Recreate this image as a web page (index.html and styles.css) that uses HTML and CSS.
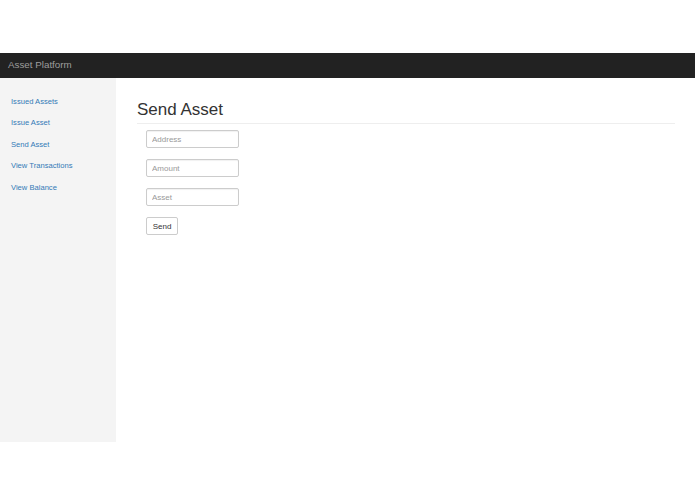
FILE: index.html
```html
<!DOCTYPE html>
<html>
<head>
<meta charset="utf-8">
<title>Asset Platform</title>
<link rel="stylesheet" href="styles.css">
</head>
<body>
<div class="page">
  <div class="top-space"></div>
  <nav class="navbar"><span class="brand">Asset Platform</span></nav>
  <div class="layout">
    <aside class="sidebar">
      <a class="side-link" href="#">Issued Assets</a>
      <a class="side-link" href="#">Issue Asset</a>
      <a class="side-link" href="#">Send Asset</a>
      <a class="side-link" href="#">View Transactions</a>
      <a class="side-link" href="#">View Balance</a>
    </aside>
    <main class="main">
      <h2 class="page-title">Send Asset</h2>
      <form class="send-form">
        <input class="field" type="text" placeholder="Address">
        <input class="field" type="text" placeholder="Amount">
        <input class="field" type="text" placeholder="Asset">
        <button class="btn" type="button">Send</button>
      </form>
    </main>
  </div>
</div>
</body>
</html>
```
FILE: styles.css
```css
html, body {
  margin: 0;
  padding: 0;
  background: #fff;
  font-family: "Liberation Sans", Arial, Helvetica, sans-serif;
  color: #333;
}
.page {
  display: flex;
  flex-direction: column;
  width: 695px;
  height: 494px;
}
.top-space {
  height: 53px;
}
.navbar {
  height: 25px;
  background: #222;
  display: flex;
  align-items: center;
  padding: 0 0 2px 8px;
  box-sizing: border-box;
}
.brand {
  color: #9d9d9d;
  font-size: 9.8px;
  line-height: 12px;
}
.layout {
  display: flex;
  height: 364px;
}
.sidebar {
  width: 116px;
  background: #f4f4f4;
  padding: 12.5px 0 0 11px;
  box-sizing: border-box;
  display: flex;
  flex-direction: column;
}
.side-link {
  display: block;
  color: #337ab7;
  text-decoration: none;
  font-size: 7.6px;
  line-height: 21.6px;
}
.main {
  flex: 1;
  padding: 0 20px 0 21px;
}
.page-title {
  margin: 22px 0 0;
  padding: 0 0 4px;
  font-size: 17px;
  font-weight: 500;
  line-height: 19px;
  color: #333;
  border-bottom: 1px solid #eee;
}
.send-form {
  display: flex;
  flex-direction: column;
  align-items: flex-start;
  gap: 11px;
  margin: 6px 0 0 9px;
}
.field {
  width: 93px;
  height: 18px;
  box-sizing: border-box;
  border: 1px solid #ccc;
  border-radius: 2px;
  padding: 0 5px;
  margin: 0;
  font-family: "Liberation Sans", Arial, sans-serif;
  font-size: 8px;
  color: #555;
  box-shadow: inset 0 1px 1px rgba(0,0,0,0.06);
  outline: none;
}
.field::placeholder {
  color: #999;
}
.btn {
  width: 32px;
  height: 18px;
  box-sizing: border-box;
  border: 1px solid #ccc;
  border-radius: 2px;
  background: #fff;
  padding: 0;
  margin: 0;
  font-family: "Liberation Sans", Arial, sans-serif;
  font-size: 8px;
  color: #333;
}
```
